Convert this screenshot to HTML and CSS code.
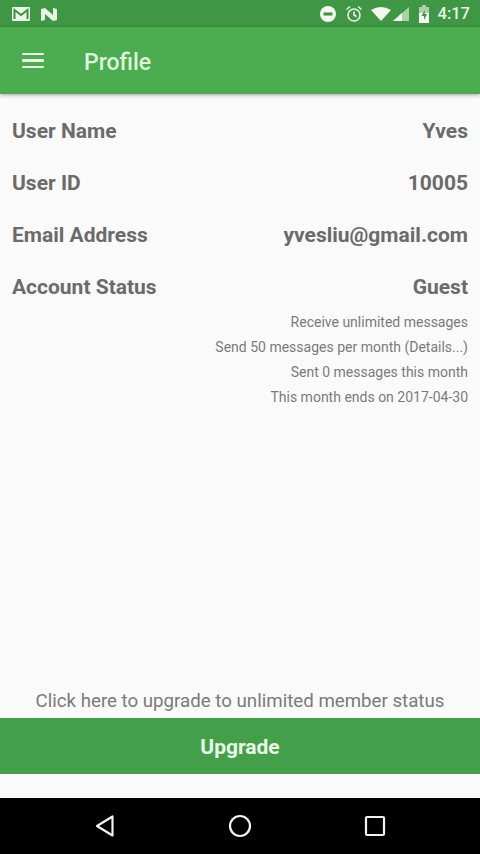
FILE: index.html
```html
<!DOCTYPE html>
<html lang="en">

<head>
    <meta charset="UTF-8">
    <meta name="viewport" content="width=device-width, initial-scale=1.0">
    <title>Profile</title>

    <link rel="stylesheet" href="styles.css">
</head>

<body>
    <div class="phone">
        <div class="status">
            <div class="status-left">
                <svg width="18" height="14" viewBox="0 0 18 14">
                    <rect x="0" y="0" width="18" height="14" rx="1" fill="#e8f5e4" />
                    <path d="M2.500 12V3l6.500 5 6.500-5v9" fill="none" stroke="#3f8f45" stroke-width="2" />
                </svg>
                <svg width="18" height="14" viewBox="0 0 18 14">
                    <path d="M1 2l4-1 8 7V1l4 1v11l-4 1-8-7v6l-4 1z" fill="#e8f5e4" />
                </svg>
            </div>
            <div class="status-right">
                <svg width="18" height="18" viewBox="0 0 18 18">
                    <circle cx="9" cy="9" r="8" fill="#f1f8ee" />
                    <rect x="4.500" y="7.500" width="9" height="3" fill="#3f8f45" />
                </svg>
                <svg width="18" height="18" viewBox="0 0 18 18">
                    <circle cx="9" cy="10" r="6" fill="none" stroke="#e8f5e4" stroke-width="1.600" />
                    <path d="M9 6.500V10l2.500 1.500M1.500 4.500L5 1.500M16.500 4.500L13 1.500" fill="none" stroke="#e8f5e4" stroke-width="1.600" />
                </svg>
                <svg class="signal" width="39" height="16" viewBox="0 0 39 16">
                    <path d="M0 4Q10-2 20 4L10 15z" fill="#f1f8ee" />
                    <path d="M22 15L38 1v14z" fill="#a9d3a6" />
                    <path d="M22 15l9-8v8z" fill="#f1f8ee" />
                </svg>
                <svg width="12" height="18" viewBox="0 0 12 18">
                    <path d="M4 0h4v2h3v16H1V2h3z" fill="#a9d3a6" />
                    <path d="M1 8h10v10H1z" fill="#f1f8ee" />
                    <path d="M7 5L3.500 11H6v4l3-6H6.500z" fill="#3f8f45" />
                </svg>
                <span class="time">4:17</span>
            </div>
        </div>

        <div class="toolbar">
            <div class="menu-icon">
                <span></span>
                <span></span>
                <span></span>
            </div>
            <div class="title">Profile</div>
        </div>

        <div class="content">
            <div class="rows">
                <div class="row"><span>User Name</span><span>Yves</span></div>
                <div class="row"><span>User ID</span><span>10005</span></div>
                <div class="row"><span>Email Address</span><span>yvesliu@gmail.com</span></div>
                <div class="row"><span>Account Status</span><span>Guest</span></div>
            </div>
            <div class="details">
                <div>Receive unlimited messages</div>
                <div>Send 50 messages per month (Details...)</div>
                <div>Sent 0 messages this month</div>
                <div>This month ends on 2017-04-30</div>
            </div>
            <div class="hint">Click here to upgrade to unlimited member status</div>
            <div class="upgrade">Upgrade</div>
        </div>

        <div class="navbar">
            <svg width="22" height="24" viewBox="0 0 22 24">
                <path d="M18.500 2.500v19L3 12z" fill="none" stroke="#f2f2f2" stroke-width="2.200" stroke-linejoin="round" />
            </svg>
            <svg width="24" height="24" viewBox="0 0 24 24">
                <circle cx="12" cy="12" r="10" fill="none" stroke="#f2f2f2" stroke-width="2.200" />
            </svg>
            <svg width="22" height="22" viewBox="0 0 22 22">
                <rect x="2" y="2" width="18" height="18" rx="1" fill="none" stroke="#f2f2f2" stroke-width="2.200" />
            </svg>
        </div>
    </div>
</body>

</html>
```

FILE: styles.css
```css
* {
    box-sizing: border-box;
}

body {
    margin: 0;
    font-family: Roboto, sans-serif;
}

.phone {
    width: 480px;
    height: 854px;
    display: flex;
    flex-direction: column;
    overflow: hidden;
    background-color: #fafafa;
}

.status {
    height: 27px;
    padding: 0 10px 0 12px;
    display: flex;
    justify-content: space-between;
    align-items: center;
    background-color: #3f9746;
}

.status-left {
    display: flex;
    align-items: center;
    gap: 10px;
}

.status-right {
    display: flex;
    align-items: center;
    gap: 8px;
}

.status .time {
    font-size: 16.500px;
    font-weight: 500;
    color: #e8f5e4;
}

.toolbar {
    height: 67px;
    display: flex;
    align-items: center;
    background-color: #4bac50;
    box-shadow: 0 1px 4px rgba(0, 0, 0, .35);
}

.menu-icon {
    width: 22px;
    margin-left: 22px;
    display: flex;
    flex-direction: column;
    gap: 4px;
}

.menu-icon span {
    height: 2.500px;
    border-radius: 1px;
    background-color: #e8f5e4;
}

.title {
    margin-left: 40px;
    padding-top: 4px;
    font-size: 23px;
    font-weight: 500;
    color: #dff3da;
}

.content {
    flex: 1;
    display: flex;
    flex-direction: column;
}

.rows {
    padding: 11px 12px 0;
}

.row {
    height: 52px;
    display: flex;
    justify-content: space-between;
    align-items: center;
    font-size: 21px;
    font-weight: 700;
    color: #6b6b6b;
}

.details {
    padding: 0 12px;
    margin-top: -3px;
    text-align: right;
    font-size: 14px;
    line-height: 25px;
    color: #7a7a7a;
}

.hint {
    margin-top: auto;
    height: 34px;
    line-height: 34px;
    text-align: center;
    font-size: 18.700px;
    color: #7a7a7a;
}

.upgrade {
    height: 56px;
    margin-bottom: 24px;
    line-height: 58px;
    text-align: center;
    font-size: 21px;
    font-weight: 700;
    color: #e8f8e4;
    background-color: #449f4b;
}

.navbar {
    height: 56px;
    display: flex;
    justify-content: center;
    align-items: center;
    gap: 112px;
    background-color: #000;
}
```
